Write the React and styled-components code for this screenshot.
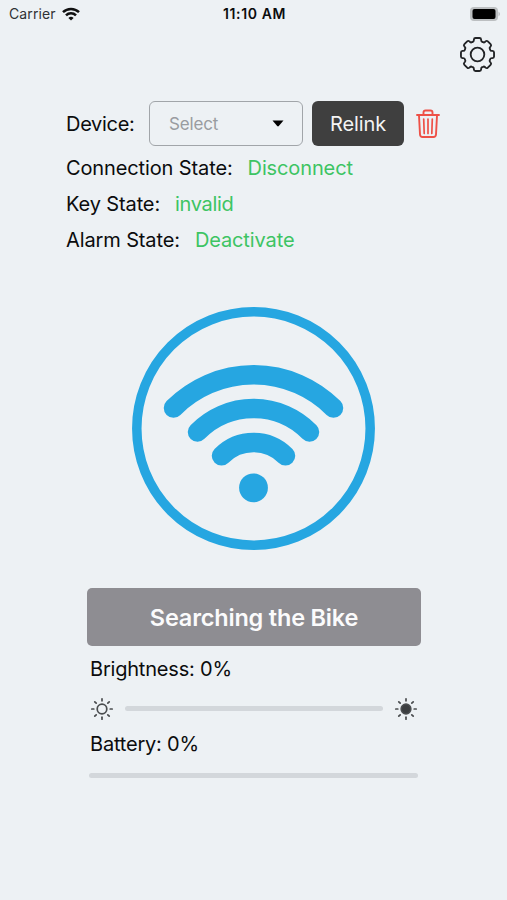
import styled, { createGlobalStyle } from "styled-components";

const GlobalStyle = createGlobalStyle`
  * {
    box-sizing: border-box;
  }
  body {
    margin: 0;
    background: #edf1f4;
    font-family: Inter, "Liberation Sans", sans-serif;
    color: #0b0c0d;
  }
`;

const Screen = styled.div`
  height: 900px;
  overflow: hidden;
  display: flex;
  flex-direction: column;
`;

const StatusBar = styled.header`
  height: 27px;
  display: grid;
  grid-template-columns: 1fr auto 1fr;
  align-items: center;
  padding: 0 7px 0 9px;
`;

const Carrier = styled.div`
  display: flex;
  align-items: center;
  gap: 6px;
  font-size: 14px;
  letter-spacing: 0.1px;
  color: #303234;
`;

const Clock = styled.div`
  font-size: 14px;
  font-weight: 600;
  letter-spacing: 0.6px;
`;

const BatteryIcon = styled.svg`
  justify-self: end;
`;

const TopBar = styled.div`
  height: 74px;
  display: flex;
  justify-content: flex-end;
  padding: 10px 12px 0 0;
`;

const Info = styled.section`
  padding-left: 66px;
`;

const DeviceRow = styled.div`
  display: flex;
  align-items: center;
  height: 45px;
  margin-bottom: 4px;
`;

const Label = styled.span`
  font-size: 20px;
  line-height: 36px;
  letter-spacing: ${(props) => props.$spacing || -0.12}px;
  white-space: nowrap;
`;

const DeviceLabel = styled(Label)`
  width: 83px;
  letter-spacing: -0.3px;
`;

const Select = styled.div`
  width: 154px;
  height: 45px;
  display: flex;
  align-items: center;
  justify-content: space-between;
  padding: 0 18px 0 19px;
  border: 1.5px solid #a1a5a9;
  border-radius: 6px;
  font-size: 17px;
  letter-spacing: -0.15px;
  color: #999ca0;
`;

const Relink = styled.button`
  width: 92px;
  height: 45px;
  margin: 0 12px 0 9px;
  padding: 0;
  border: 0;
  border-radius: 6px;
  background: #3f3f3f;
  color: #f4f4f4;
  font: 20px Inter, sans-serif;
  letter-spacing: -0.1px;
`;

const StateRow = styled.div`
  display: flex;
  gap: 15px;
  height: 36px;
`;

const StateValue = styled(Label)`
  color: #3dc463;
`;

const Signal = styled.svg`
  display: block;
  margin: 49px 0 0 132px;
`;

const Controls = styled.section`
  width: 334px;
  margin: 38px 0 0 87px;
`;

const SearchButton = styled.button`
  display: block;
  width: 100%;
  height: 58px;
  border: 0;
  border-radius: 5px;
  background: #8e8d92;
  color: #fbfbfc;
  font: 600 23.5px Inter, sans-serif;
  letter-spacing: -0.2px;
`;

const Reading = styled.div`
  height: 45px;
  padding: 1px 0 0 3px;
  font-size: 20px;
  line-height: 45px;
  letter-spacing: -0.2px;
`;

const SliderRow = styled.div`
  height: 34px;
  display: flex;
  align-items: center;
  gap: 11px;
  padding: 1px 3px 0;
  margin-bottom: -4px;
`;

const Track = styled.div`
  flex: 1;
  height: 5px;
  border-radius: 3px;
  background: #d3d7db;
`;

const BatteryTrack = styled(Track)`
  margin: 7px 3px 0 2px;
`;

const states = [
  { label: "Connection State:", value: "Disconnect" },
  { label: "Key State:", value: "invalid", spacing: -0.35 },
  { label: "Alarm State:", value: "Deactivate" },
];

function WifiIcon() {
  return (
    <svg width="18" height="14" viewBox="0 0 18 14" fill="none" stroke="#111" strokeWidth="2.5">
      <path d="M1 5.2a11.4 11.4 0 0 1 16 0" />
      <path d="M4 8.4a7 7 0 0 1 10 0" />
      <path d="M6.4 10.9a3.8 3.8 0 0 1 5.2 0L9 13.6Z" fill="#111" stroke="none" />
    </svg>
  );
}

function gearPath() {
  // one tooth, repeated every 45 degrees; corners are rounded through the midpoints
  const tooth = [[14.1, -22.5], [13.8, -16], [17.4, -12], [17.4, 12], [13.8, 16]];
  const points = [];
  for (let i = 0; i < 8; i++) {
    tooth.forEach(([r, deg]) => {
      const a = ((deg + i * 45) * Math.PI) / 180;
      points.push([18 + r * Math.cos(a), 18 + r * Math.sin(a)]);
    });
  }
  const towards = (p, q, d) => {
    const len = Math.hypot(q[0] - p[0], q[1] - p[1]);
    const t = Math.min(d / len, 0.5);
    return `${(p[0] + (q[0] - p[0]) * t).toFixed(2)} ${(p[1] + (q[1] - p[1]) * t).toFixed(2)}`;
  };
  const parts = points.map((p, i) => {
    const prev = points[(i + points.length - 1) % points.length];
    const next = points[(i + 1) % points.length];
    return `${i ? "L" : "M"}${towards(p, prev, 1.6)}Q${p[0].toFixed(2)} ${p[1].toFixed(2)} ${towards(p, next, 1.6)}`;
  });
  return parts.join("") + "Z";
}

function GearIcon() {
  return (
    <svg width="35" height="35" viewBox="0 0 36 36" fill="none" stroke="#222426" strokeWidth="1.9" strokeLinejoin="round">
      <path d={gearPath()} />
      <circle cx="18" cy="18" r="7" />
    </svg>
  );
}

function TrashIcon() {
  return (
    <svg width="24" height="30" viewBox="0 0 24 30" fill="none" stroke="#ee5147" strokeWidth="1.9" strokeLinecap="round" strokeLinejoin="round">
      <path d="M1 6h22M7.5 6V3.5Q7.5 1.5 9.5 1.5h5Q16.5 1.5 16.5 3.5V6" />
      <path d="M3 6.5 4 25.5q.2 2.5 2.5 2.5h11q2.3 0 2.5-2.5L21 6.5" />
      <path d="M7.7 10l.5 14.5M12 10v14.5M16.3 10l-.5 14.5" strokeWidth="1.7" />
    </svg>
  );
}

function SunIcon({ filled }) {
  return (
    <svg width="24" height="24" viewBox="0 0 24 24" fill="none" stroke="#4a4d4f" strokeWidth="1.7" strokeLinecap="round">
      <circle cx="12" cy="12" r="4.8" fill={filled ? "#3b3e40" : "none"} />
      {[0, 45, 90, 135, 180, 225, 270, 315].map((deg) => (
        <path key={deg} d="M12 1.8v2" transform={`rotate(${deg} 12 12)`} />
      ))}
    </svg>
  );
}

export default function App() {
  return (
    <Screen>
      <GlobalStyle />
      <StatusBar>
        <Carrier>
          Carrier
          <WifiIcon />
        </Carrier>
        <Clock>11:10 AM</Clock>
        <BatteryIcon width="30" height="16" viewBox="0 0 30 16">
          <rect x="0" y="1" width="28" height="14" rx="4" fill="#bcbfc1" />
          <rect x="2.5" y="3" width="23" height="10" rx="2" fill="#000" />
          <path d="M28.5 5.5q3 2.500 0 5z" fill="#bcbfc1" />
        </BatteryIcon>
      </StatusBar>
      <TopBar>
        <GearIcon />
      </TopBar>
      <Info>
        <DeviceRow>
          <DeviceLabel>Device:</DeviceLabel>
          <Select>
            Select
            <svg width="12" height="7" viewBox="0 0 12 7">
              <path d="M.5.5h11L6.800 6q-.8.8-1.6 0Z" />
            </svg>
          </Select>
          <Relink>Relink</Relink>
          <TrashIcon />
        </DeviceRow>
        {states.map((state) => (
          <StateRow key={state.label}>
            <Label>{state.label}</Label>
            <StateValue $spacing={state.spacing}>{state.value}</StateValue>
          </StateRow>
        ))}
      </Info>
      <Signal width="243" height="243" viewBox="0 0 243 243" fill="none" stroke="#26a6e1" strokeLinecap="round">
        <circle cx="121.5" cy="121.5" r="116.7" strokeWidth="9.5" />
        <g strokeWidth="19.5">
          <path d="M41.5 101a113 113 0 0 1 160 0" />
          <path d="M65.5 125a78.5 78.5 0 0 1 112 0" />
          <path d="M89.5 148.8a45 45 0 0 1 64 0" />
        </g>
        <circle cx="121.5" cy="180.8" r="14.4" fill="#26a6e1" stroke="none" />
      </Signal>
      <Controls>
        <SearchButton>Searching the Bike</SearchButton>
        <Reading>Brightness: 0%</Reading>
        <SliderRow>
          <SunIcon />
          <Track />
          <SunIcon filled />
        </SliderRow>
        <Reading>Battery: 0%</Reading>
        <BatteryTrack />
      </Controls>
    </Screen>
  );
}
